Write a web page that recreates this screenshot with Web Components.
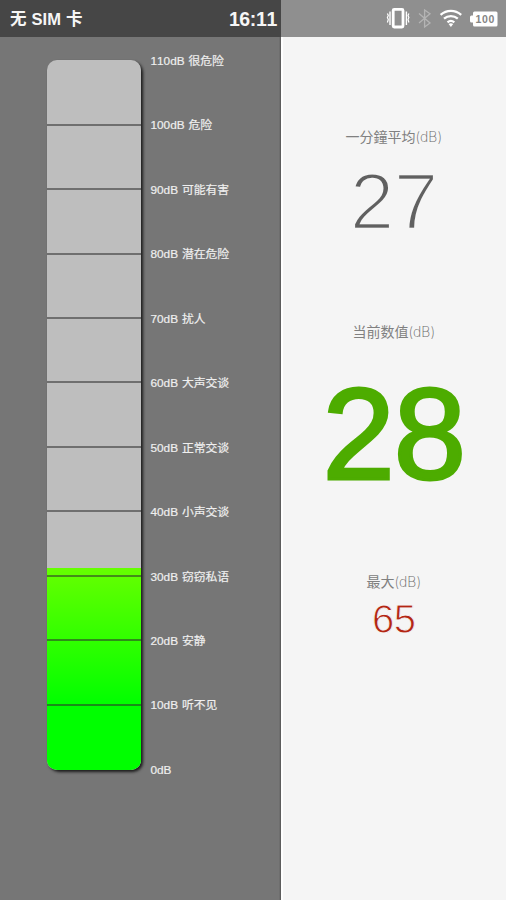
<!DOCTYPE html>
<html lang="zh-CN">
<head>
<meta charset="utf-8">
<title>dB</title>
<style>
html,body{margin:0;height:100%}
body{font-family:"Liberation Sans","Noto Sans CJK SC",sans-serif;background:#f5f5f5;overflow:hidden}
</style>
</head>
<body>
<sound-app></sound-app>
<script>
class StatusBar extends HTMLElement{
  constructor(){
    super();
    this.attachShadow({mode:'open'}).innerHTML=`<style>
:host{display:flex;height:37px;color:#f6f6f6;background:linear-gradient(90deg,#464646 281px,#8f8f8f 281px)}
.left{box-sizing:border-box;width:281px;padding:0 4px 0 10px;display:flex;justify-content:space-between;align-items:center;font-weight:700}
.sim{font-size:16.5px;line-height:38px;white-space:pre;word-spacing:.5px}
.time{font-size:19.5px;line-height:40px;font-kerning:none;letter-spacing:-.35px}
svg{display:block;margin-left:104px}
</style>
<div class="left"><span class="sim">无 SIM 卡</span><span class="time">16:11</span></div>
<svg width="121" height="37" viewBox="385 0 121 37" fill="none" stroke="#fff">
<rect x="393.2" y="9.4" width="9.800" height="17.600" rx="1" stroke-width="2.8"/>
<path d="M390 11.5v13.500M406.4 11.5v13.500" stroke-width="1.4"/><path d="M387.4 13.5l.9 2-.9 2 .9 2-.9 3M408.9 13.5l-.9 2 .9 2-.9 2 .9 3" stroke-width="1.2"/>
<path d="M419 13.5l11 9.4-5.4 4V10l5.4 3.8-11 9.2" stroke="#b4b4b4" stroke-width="1.3"/>
<g stroke-width="2.3"><path d="M440.6 14.8c6-5.3 14.600-5.300 20.600 0"/><path d="M444 18.700c4-3.500 9.800-3.500 13.800 0"/><path d="M447.500 22.300c2-1.700 4.800-1.700 6.800 0"/></g>
<path d="M448.600 24.100q2.300-1.500 4.600 0l-2.300 2.900z" fill="#fff" stroke="none"/>
<path d="M474.500 11.500h21.500q1.500 0 1.500 1.500v12q0 1.500-1.500 1.500h-21.500q-1.500 0-1.500-1.500V22.500h-1.500q-1.500 0-1.500-1.500v-4q0-1.500 1.500-1.500h1.500v-2.500q0-1.500 1.500-1.500z" fill="#fff" stroke="none"/>
<text x="485.300" y="22.800" text-anchor="middle" font-family="Liberation Sans,sans-serif" font-weight="700" font-size="10.500" letter-spacing=".7" fill="#858585" stroke="none">100</text>
</svg>`;
  }
}
customElements.define('status-bar',StatusBar);

class LevelMeter extends HTMLElement{
  constructor(){
    super();
    const names=['很危险','危险','可能有害','潜在危险','扰人','大声交谈','正常交谈','小声交谈','窃窃私语','安静','听不见',''];
    const rows=names.map((n,i)=>`<li>${110-i*10}dB${n?' '+n:''}</li>`).join('');
    this.attachShadow({mode:'open'}).innerHTML=`<style>
:host{display:flex;box-sizing:border-box;width:281px;padding:23px 0 0 47px;background:linear-gradient(90deg,transparent 279px,#555 281px),#767676}
.tube{width:94px;height:710px;border-radius:10px;overflow:hidden;display:grid;grid-template-rows:508px 1fr;background:#bebebe}
.shade{height:710px;border-radius:10px;box-shadow:2px 2px 3px #1c1c1c}
.fill{grid-row:2;grid-column:1;background:linear-gradient(#6f0,#0f0 68%)}
.marks{grid-row:1/3;grid-column:1;padding-top:1.2px;display:flex;flex-direction:column}
.marks i{display:block;box-sizing:border-box;height:64.450px;flex:none;border-bottom:2px solid rgba(45,45,45,.55)}
ul{list-style:none;margin:-9px 0 0 9.500px;padding:0}
li{height:64.450px;line-height:20px;font-size:11.800px;color:#efefef;-webkit-text-stroke:.2px #efefef;white-space:nowrap;word-spacing:.6px;font-kerning:none}
</style>
<div class="shade"><div class="tube"><div class="fill"></div><div class="marks">${'<i></i>'.repeat(10)}</div></div></div><ul>${rows}</ul>`;
  }
}
customElements.define('level-meter',LevelMeter);

class DbReading extends HTMLElement{
  constructor(){
    super();
    this.attachShadow({mode:'open'}).innerHTML=`<style>
:host{display:flex;flex-direction:column;align-items:center;color:#606060}
.label{font-size:14px;line-height:20px;color:#808080;white-space:nowrap}
.unit{font-family:Inter,sans-serif;font-weight:200;color:#686868}
.value{font-size:80px;line-height:84px;letter-spacing:-.5px;margin-top:13px;-webkit-text-stroke:2.600px #f5f5f5}
:host([kind=now]) .value{font-size:130px;line-height:130px;color:#4dac00;-webkit-text-stroke:3px #4dac00;letter-spacing:-1px;margin-top:27px}
:host([kind=max]) .value{font-size:40px;line-height:46px;letter-spacing:-.5px;color:#b32614;margin-top:4px;-webkit-text-stroke:.900px #f5f5f5}
</style><div class="label"><slot name="label"></slot><span class="unit">(dB)</span></div><div class="value"><slot></slot></div>`;
  }
}
customElements.define('db-reading',DbReading);

class SoundApp extends HTMLElement{
  constructor(){
    super();
    this.attachShadow({mode:'open'}).innerHTML=`<style>
:host{display:flex;flex-direction:column;width:506px;height:900px}
main{display:flex;flex:1}
section{flex:1;display:grid;grid-template-rows:195px 250px 1fr;align-items:start;padding:90px 1.5px 0 0;border-left:2px solid #fff}
</style>
<status-bar></status-bar>
<main><level-meter></level-meter>
<section>
<db-reading kind="avg"><span slot="label">一分鐘平均</span>27</db-reading>
<db-reading kind="now"><span slot="label">当前数值</span>28</db-reading>
<db-reading kind="max"><span slot="label">最大</span>65</db-reading>
</section></main>`;
  }
}
customElements.define('sound-app',SoundApp);
</script>
</body>
</html>
